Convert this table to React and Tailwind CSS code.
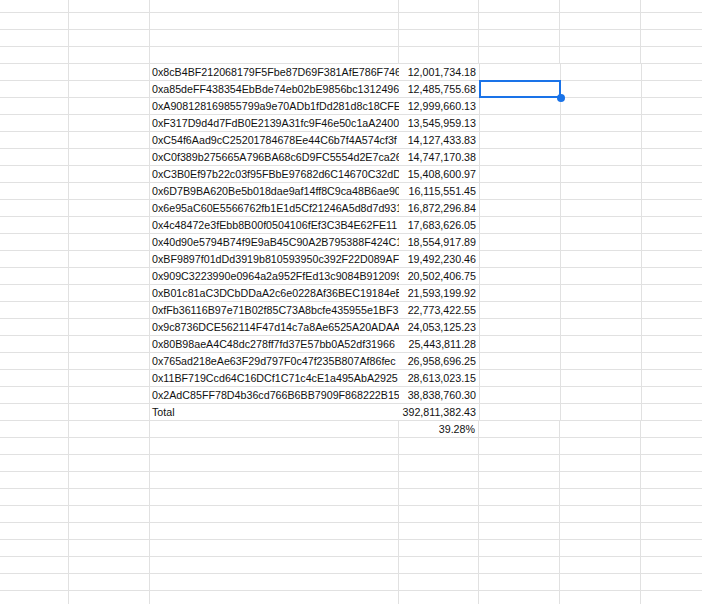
const rows = [
  ["0x8cB4BF212068179F5Fbe87D69F381AfE786F746", "12,001,734.18"],
  ["0xa85deFF438354EbBde74eb02bE9856bc1312496", "12,485,755.68"],
  ["0xA908128169855799a9e70ADb1fDd281d8c18CFE", "12,999,660.13"],
  ["0xF317D9d4d7FdB0E2139A31fc9F46e50c1aA2400", "13,545,959.13"],
  ["0xC54f6Aad9cC25201784678Ee44C6b7f4A574cf3f", "14,127,433.83"],
  ["0xC0f389b275665A796BA68c6D9FC5554d2E7ca26", "14,747,170.38"],
  ["0xC3B0Ef97b22c03f95FBbE97682d6C14670C32dD", "15,408,600.97"],
  ["0x6D7B9BA620Be5b018dae9af14ff8C9ca48B6ae90", "16,115,551.45"],
  ["0x6e95aC60E5566762fb1E1d5Cf21246A5d8d7d931", "16,872,296.84"],
  ["0x4c48472e3fEbb8B00f0504106fEf3C3B4E62FE11", "17,683,626.05"],
  ["0x40d90e5794B74f9E9aB45C90A2B795388F424C1", "18,554,917.89"],
  ["0xBF9897f01dDd3919b810593950c392F22D089AF", "19,492,230.46"],
  ["0x909C3223990e0964a2a952FfEd13c9084B912099", "20,502,406.75"],
  ["0xB01c81aC3DCbDDaA2c6e0228Af36BEC19184eB", "21,593,199.92"],
  ["0xfFb36116B97e71B02f85C73A8bcfe435955e1BF3", "22,773,422.55"],
  ["0x9c8736DCE562114F47d14c7a8Ae6525A20ADAA", "24,053,125.23"],
  ["0x80B98aeA4C48dc278ff7fd37E57bb0A52df31966", "25,443,811.28"],
  ["0x765ad218eAe63F29d797F0c47f235B807Af86fec", "26,958,696.25"],
  ["0x11BF719Ccd64C16DCf1C71c4cE1a495AbA2925", "28,613,023.15"],
  ["0x2AdC85FF78D4b36cd766B6BB7909F868222B15", "38,838,760.30"],
];

const FIRST_DATA = 4;
const TOTAL_ROWS = 36;

function Row({ index }) {
  const d = index - FIRST_DATA;
  let label = "";
  let value = "";
  if (d >= 0 && d < rows.length) {
    label = rows[d][0];
    value = rows[d][1];
  } else if (d === rows.length) {
    label = "Total";
    value = "392,811,382.43";
  } else if (d === rows.length + 1) {
    value = "39.28%";
  }
  const filled = label !== "" && d <= rows.length;
  const h = index === 0 ? "h-[13px]" : "h-[17px]";
  const selected = index === 5;

  return (
    <div className={`relative flex ${h} ${selected ? "z-10" : ""}`}>
      <div className="w-[69px] shrink-0 border-r border-b border-[#e1e1e1]" />
      <div className="w-[81px] shrink-0 border-r border-b border-[#e1e1e1]" />
      <div
        className={`w-[249px] shrink-0 border-b border-[#e1e1e1] overflow-hidden whitespace-nowrap pl-[2px] flex items-center ${
          filled ? "" : "border-r"
        }`}
      >
        <span className={filled ? "" : "hidden"}>{label}</span>
      </div>
      <div
        className={`shrink-0 border-r border-b border-[#e1e1e1] overflow-hidden whitespace-nowrap pr-[3px] flex items-center justify-end ${
          filled ? "w-[81px]" : "w-[80px]"
        }`}
      >
        {value}
      </div>
      <div className="relative w-[81px] shrink-0 border-r border-b border-[#e1e1e1]">
        {selected && (
          <>
            <div className="absolute -left-px -top-px w-[82px] h-[18px] border-2 border-[#1a73e8]" />
            <div className="absolute -right-[5px] -bottom-[5px] w-[8px] h-[8px] rounded-full bg-[#1a73e8]" />
          </>
        )}
      </div>
      <div className="w-[81px] shrink-0 border-r border-b border-[#e1e1e1]" />
      <div className="flex-1 border-b border-[#e1e1e1]" />
    </div>
  );
}

export default function App() {
  return (
    <div
      className="w-[702px] h-[604px] overflow-hidden bg-white text-[10.7px] text-[#111]"
      style={{ fontFamily: '"Liberation Sans", Arial, sans-serif' }}
    >
      {Array.from({ length: TOTAL_ROWS }, (_, i) => (
        <Row key={i} index={i} />
      ))}
    </div>
  );
}
